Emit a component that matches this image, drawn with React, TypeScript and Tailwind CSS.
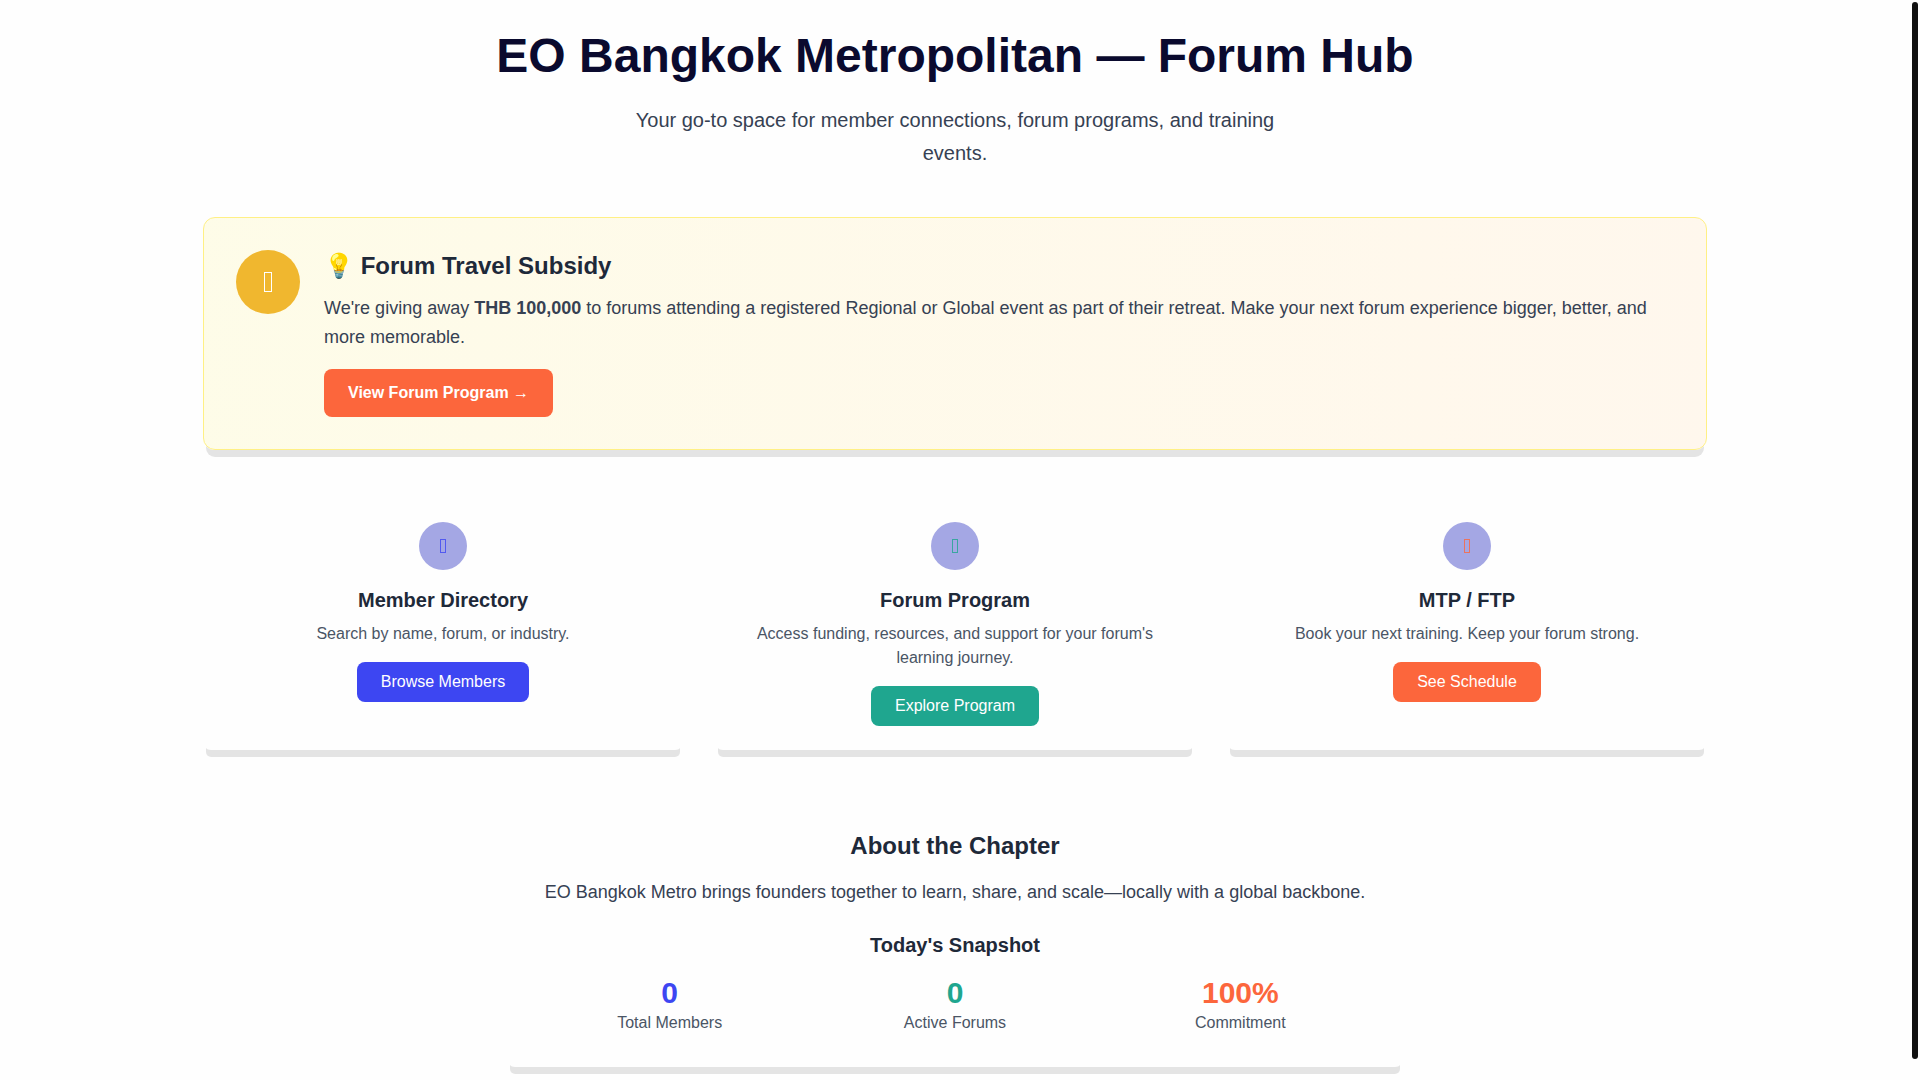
type CardProps = {
  title: string;
  text: string;
  action: string;
  glyph: string;
  button: string;
};

const cards: CardProps[] = [
  {
    title: "Member Directory",
    text: "Search by name, forum, or industry.",
    action: "Browse Members",
    glyph: "border-[#3d46f2]",
    button: "bg-[#3d46f2]",
  },
  {
    title: "Forum Program",
    text: "Access funding, resources, and support for your forum's learning journey.",
    action: "Explore Program",
    glyph: "border-[#1fa68f]",
    button: "bg-[#1fa68f]",
  },
  {
    title: "MTP / FTP",
    text: "Book your next training. Keep your forum strong.",
    action: "See Schedule",
    glyph: "border-[#fc663c]",
    button: "bg-[#fc663c]",
  },
];

const stats = [
  { value: "0", label: "Total Members", color: "text-[#3d46f2]" },
  { value: "0", label: "Active Forums", color: "text-[#1fa68f]" },
  { value: "100%", label: "Commitment", color: "text-[#fc663c]" },
];

function LinkCard({ title, text, action, glyph, button }: CardProps) {
  return (
    <article className="rounded-lg bg-[#fefefe] p-6 text-center shadow-[0_10px_0_-3px_rgba(0,0,0,0.1)]">
      <div className="mx-auto mb-4 flex size-12 items-center justify-center rounded-full bg-[#a4a7e4]">
        <span aria-hidden="true" className={`h-3.5 w-1.5 border opacity-80 ${glyph}`} />
      </div>
      <h3 className="mb-2 text-xl font-bold text-gray-800">{title}</h3>
      <p className="mb-4 text-base text-gray-600">{text}</p>
      <a href="#" className={`inline-block rounded-lg px-6 py-2 align-top text-base text-white ${button}`}>
        {action}
      </a>
    </article>
  );
}

export default function App() {
  return (
    <div className="flex h-screen overflow-hidden bg-[#fefefe] font-['Liberation_Sans',Arial,sans-serif]">
      <main className="min-w-0 flex-1 overflow-y-auto [scrollbar-width:none]">
        <div className="mx-auto max-w-screen-2xl px-4 py-8">
          <header className="mb-12 text-center">
            <h1 className="mb-6 text-5xl font-bold text-[#0a0a2e]">EO Bangkok Metropolitan — Forum Hub</h1>
            <p className="mx-auto max-w-2xl text-xl leading-relaxed text-gray-700">
              Your go-to space for member connections, forum programs, and training events.
            </p>
          </header>

          <section className="mb-12 flex items-start gap-6 rounded-xl border border-yellow-200 bg-linear-to-r from-yellow-50 to-orange-50 p-8 shadow-[0_10px_0_-3px_rgba(0,0,0,0.1)]">
            <div className="flex size-16 shrink-0 items-center justify-center rounded-full bg-[#f0b72f]">
              <span aria-hidden="true" className="h-5 w-2 border border-white" />
            </div>
            <div className="flex-1">
              <h2 className="mb-3 text-2xl font-bold text-gray-800">💡 Forum Travel Subsidy</h2>
              <p className="mb-4 text-lg leading-relaxed text-gray-700">
                We're giving away <strong>THB 100,000</strong> to forums attending a registered Regional or Global
                event as part of their retreat. Make your next forum experience bigger, better, and more memorable.
              </p>
              <a
                href="#"
                className="inline-block rounded-lg bg-[#fc663c] px-6 py-3 align-top text-base font-bold text-white"
              >
                View Forum Program →
              </a>
            </div>
          </section>

          <section className="mb-12 grid grid-cols-3 gap-8">
            {cards.map((card) => (
              <LinkCard key={card.title} {...card} />
            ))}
          </section>

          <section className="mx-auto max-w-4xl rounded-lg bg-[#fefefe] p-8 text-center shadow-[0_10px_0_-3px_rgba(0,0,0,0.1)]">
            <h2 className="mb-4 text-2xl font-bold text-gray-800">About the Chapter</h2>
            <p className="mb-6 text-lg leading-relaxed text-gray-700">
              EO Bangkok Metro brings founders together to learn, share, and scale—locally with a global backbone.
            </p>
            <h3 className="mb-4 text-xl font-bold text-gray-800">Today's Snapshot</h3>
            <dl className="grid grid-cols-3 gap-6">
              {stats.map((stat) => (
                <div key={stat.label} className="flex flex-col-reverse">
                  <dt className="text-base text-gray-600">{stat.label}</dt>
                  <dd className={`text-3xl font-bold ${stat.color}`}>{stat.value}</dd>
                </div>
              ))}
            </dl>
          </section>
        </div>
      </main>
      {/* Slim scroll track with a rounded thumb */}
      <div aria-hidden="true" className="w-2.5 shrink-0 px-0.5 pt-0.5 pb-[21px]">
        <div className="h-full rounded-full bg-[#111111]" />
      </div>
    </div>
  );
}
